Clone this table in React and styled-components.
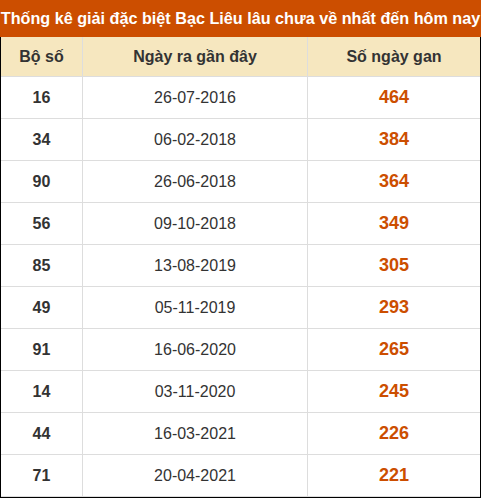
import React from 'react';
import styled, { createGlobalStyle } from 'styled-components';

const GlobalStyle = createGlobalStyle`
  html, body {
    margin: 0;
    padding: 0;
    background: #ffffff;
  }
  body {
    font-family: "Liberation Sans", Arial, sans-serif;
  }
`;

const rows = [
  ['16', '26-07-2016', '464'],
  ['34', '06-02-2018', '384'],
  ['90', '26-06-2018', '364'],
  ['56', '09-10-2018', '349'],
  ['85', '13-08-2019', '305'],
  ['49', '05-11-2019', '293'],
  ['91', '16-06-2020', '265'],
  ['14', '03-11-2020', '245'],
  ['44', '16-03-2021', '226'],
  ['71', '20-04-2021', '221']
];

const Wrapper = styled.div`
  width: 481px;
`;

const Title = styled.h2`
  margin: 0;
  height: 37px;
  background: #cc4e00;
  color: #ffffff;
  font-size: 16.2px;
  font-weight: 700;
  display: flex;
  align-items: center;
  justify-content: center;
  white-space: nowrap;
`;

const Table = styled.div`
  display: grid;
  grid-template-columns: 82px 225px 172px;
  border: 1px solid #000000;
  border-top: none;
`;

const Cell = styled.div`
  display: flex;
  align-items: center;
  justify-content: center;
  height: ${(p) => (p.$head ? 39 : 41)}px;
  border-bottom: 1px solid #dddddd;
  border-right: ${(p) => (p.$last ? 'none' : '1px solid #dddddd')};
  background: ${(p) => (p.$head ? '#f6e7bf' : '#ffffff')};
  color: ${(p) => (p.$accent ? '#cc4e00' : '#333333')};
  font-size: ${(p) => (p.$accent ? 18 : 16)}px;
  font-weight: ${(p) => (p.$bold ? 700 : 400)};
`;

export default function App() {
  return (
    <Wrapper>
      <GlobalStyle />
      <Title>Thống kê giải đặc biệt Bạc Liêu lâu chưa về nhất đến hôm nay</Title>
      <Table>
        <Cell $head $bold>Bộ số</Cell>
        <Cell $head $bold>Ngày ra gần đây</Cell>
        <Cell $head $bold $last>Số ngày gan</Cell>
        {rows.map(([num, date, gan]) => (
          <React.Fragment key={num}>
            <Cell $bold>{num}</Cell>
            <Cell>{date}</Cell>
            <Cell $bold $accent $last>{gan}</Cell>
          </React.Fragment>
        ))}
      </Table>
    </Wrapper>
  );
}
